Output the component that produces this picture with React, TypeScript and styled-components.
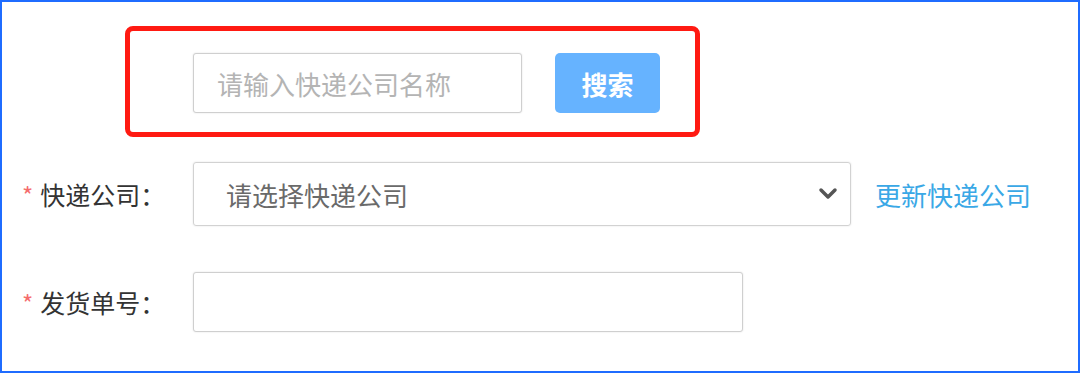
import React from "react";
import styled, { createGlobalStyle } from "styled-components";

const Global = createGlobalStyle`
  html, body { margin: 0; padding: 0; background: #fff; }
  body { font-family: "Noto Sans CJK SC", "Noto Sans", sans-serif; }
  * { box-sizing: border-box; }
`;

const Frame = styled.div`
  width: 1080px;
  height: 373px;
  border: 2px solid #1f6cff;
  background: #fff;
  display: flex;
  flex-direction: column;
`;

const SearchBox = styled.div`
  margin: 24px 0 0 123px;
  width: 575px;
  height: 111px;
  border: 5px solid #ff1a12;
  border-radius: 8px;
  display: flex;
  align-items: flex-start;
  padding: 22px 0 0 63px;
  gap: 33px;
`;

const TextInput = styled.input<{ $w: number; $h: number }>`
  width: ${(p) => p.$w}px;
  height: ${(p) => p.$h}px;
  border: 1px solid #cfcfcf;
  border-radius: 3px;
  box-shadow: 0 0 2px rgba(0, 0, 0, 0.12);
  padding: 0 23px;
  font-family: inherit;
  font-size: 26px;
  color: #555;
  outline: none;
  background: #fff;
  &::placeholder { color: #b4b4b4; }
`;

const SearchButton = styled.button`
  width: 105px;
  height: 60px;
  border: none;
  border-radius: 5px;
  background: #66b3ff;
  color: #fff;
  font-family: inherit;
  font-size: 26px;
  font-weight: 700;
  padding: 0;
`;

const Row = styled.div<{ $top: number }>`
  display: flex;
  align-items: center;
  margin-top: ${(p) => p.$top}px;
`;

const Label = styled.div`
  width: 191px;
  padding-left: 20px;
  display: flex;
  align-items: center;
  font-size: 25px;
  color: #333;
`;

const Star = styled.span`
  color: #f56c6c;
  font-size: 24px;
  line-height: 1;
  margin-right: 7px;
  position: relative;
  top: 1px;
`;

const Select = styled.div`
  width: 658px;
  height: 64px;
  border: 1px solid #d2d2d2;
  border-radius: 3px;
  box-shadow: 0 0 2px rgba(0, 0, 0, 0.12);
  display: flex;
  align-items: center;
  justify-content: space-between;
  padding: 0 12px 0 32px;
  font-size: 26px;
  color: #6a6a6a;
`;

const Link = styled.a`
  margin-left: 24px;
  font-size: 26px;
  color: #3aa8e6;
  text-decoration: none;
`;

export default function App() {
  return (
    <>
      <Global />
      <Frame>
        <SearchBox>
          <TextInput $w={329} $h={60} placeholder="请输入快递公司名称" />
          <SearchButton>搜索</SearchButton>
        </SearchBox>
        <Row $top={25}>
          <Label>
            <Star>*</Star>快递公司：
          </Label>
          <Select>
            <span>请选择快递公司</span>
            <svg width="20" height="14" viewBox="0 0 20 14">
              <polyline points="3,3 10,10 17,3" fill="none" stroke="#555" strokeWidth="3.5" strokeLinecap="round" strokeLinejoin="round" />
            </svg>
          </Select>
          <Link href="#">更新快递公司</Link>
        </Row>
        <Row $top={46}>
          <Label>
            <Star>*</Star>发货单号：
          </Label>
          <TextInput $w={550} $h={60} />
        </Row>
      </Frame>
    </>
  );
}
